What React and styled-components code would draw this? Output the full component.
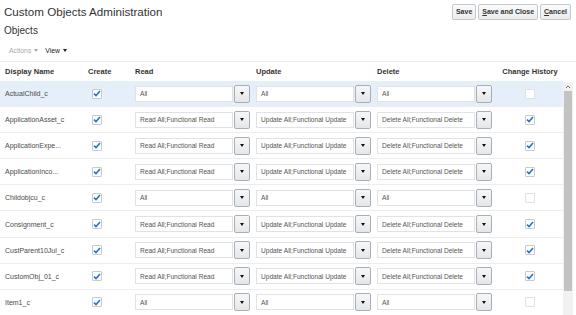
import React from "react";
import styled, { createGlobalStyle } from "styled-components";

const GlobalStyle = createGlobalStyle`
  body {
    margin: 0;
    background: #fff;
    font-family: "Liberation Sans", Arial, sans-serif;
    color: #333;
  }
`;

const Page = styled.div`
  width: 576px;
  height: 315px;
  overflow: hidden;
  padding-top: 4px;
  box-sizing: border-box;
`;

const TopBar = styled.div`
  display: flex;
  justify-content: space-between;
  align-items: center;
  height: 15px;
  padding: 0 5px 0 4px;
`;

const Title = styled.h1`
  margin: 0;
  font-size: 11.6px;
  line-height: 14px;
  font-weight: normal;
  color: #333;
`;

const ButtonGroup = styled.div`
  display: flex;
  gap: 2px;
`;

const Button = styled.button`
  height: 16px;
  padding: 0 3px;
  font-family: inherit;
  font-size: 7px;
  font-weight: bold;
  color: #333;
  background: linear-gradient(#fbfbfb, #e9ecee);
  border: 1px solid #c4c8cc;
  border-radius: 2px;
  u {
    text-decoration: underline;
  }
`;

const SubTitle = styled.h2`
  margin: 6px 0 0 4px;
  font-size: 10px;
  line-height: 12px;
  font-weight: normal;
  color: #333;
`;

const Toolbar = styled.div`
  display: flex;
  gap: 7px;
  margin: 8px 0 0 9px;
  height: 10px;
  align-items: center;
`;

const MenuItem = styled.span`
  font-size: 6.8px;
  color: ${(p) => (p.disabled ? "#a8a8a8" : "#222")};
  display: flex;
  align-items: center;
  gap: 3px;
`;

const Caret = styled.span`
  width: 0;
  height: 0;
  border-left: 2.5px solid transparent;
  border-right: 2.5px solid transparent;
  border-top: 3px solid ${(p) => p.color || "#222"};
`;

const TableWrap = styled.div`
  margin-top: 6px;
  border-top: 1px solid #ececec;
  display: flex;
`;

const Table = styled.div`
  width: 563px;
  display: grid;
  grid-template-columns: 84px 47px 121px 121px 124px 66px;
`;

const HeadCell = styled.div`
  height: 19px;
  display: flex;
  align-items: center;
  justify-content: ${(p) => (p.center ? "center" : "flex-start")};
  padding-left: ${(p) => (p.center ? 0 : p.pad || 4)}px;
  font-size: 7.5px;
  font-weight: bold;
  color: #333;
`;

const Cell = styled.div`
  height: 25px;
  border-bottom: 1px solid #ededed;
  background: ${(p) => (p.selected ? "#e4effa" : "#fff")};
  display: flex;
  align-items: center;
  justify-content: ${(p) => (p.center ? "center" : "flex-start")};
  padding-left: ${(p) => (p.center ? 0 : p.pad || 4)}px;
  font-size: 7px;
  color: #4a4a4a;
  white-space: nowrap;
`;

const Box = styled.span`
  width: 10px;
  height: 10px;
  box-sizing: border-box;
  margin-left: ${(p) => p.offset || 0}px;
  border: 1px solid ${(p) => (p.disabled ? "#e0e0e0" : "#c8cbce")};
  border-radius: 1px;
  background: #fff;
  display: flex;
  align-items: center;
  justify-content: center;
`;

const Select = styled.div`
  width: 115px;
  height: 18px;
  display: flex;
  align-items: center;
  gap: 1px;
`;

const Field = styled.div`
  flex: 1;
  height: 16px;
  box-sizing: border-box;
  border: 1px solid #dfe3e7;
  background: #fff;
  padding-left: 4px;
  display: flex;
  align-items: center;
  font-size: 6.6px;
  color: #555;
  overflow: hidden;
`;

const DropButton = styled.div`
  width: 16px;
  height: 18px;
  box-sizing: border-box;
  border: 1px solid #a9aeb3;
  border-radius: 2px;
  background: linear-gradient(#f6f7f8, #e4e7ea);
  display: flex;
  align-items: center;
  justify-content: center;
`;

const Scrollbar = styled.div`
  width: 10px;
  margin-top: 20px;
  height: 234px;
  background: #f1f1f1;
  display: flex;
  flex-direction: column;
`;

const ScrollArrow = styled.div`
  height: 9px;
  display: flex;
  align-items: center;
  justify-content: center;
`;

const Thumb = styled.div`
  height: 200px;
  background: #c3c3c3;
  margin: 0 1px;
`;

function Check({ checked, disabled, offset }) {
  return (
    <Box disabled={disabled} offset={offset}>
      {checked && (
        <svg width="8" height="7" viewBox="0 0 8 7">
          <path d="M1 3.6 L3 5.6 L7 1" fill="none" stroke="#2673c9" strokeWidth="1.6" />
        </svg>
      )}
    </Box>
  );
}

function Dropdown({ value }) {
  return (
    <Select>
      <Field>{value}</Field>
      <DropButton>
        <Caret color="#111" />
      </DropButton>
    </Select>
  );
}

const rows = [
  { name: "ActualChild_c", full: false, history: false },
  { name: "ApplicationAsset_c", full: true, history: true },
  { name: "ApplicationExpe...", full: true, history: true },
  { name: "ApplicationInco...", full: true, history: true },
  { name: "Childobjcu_c", full: false, history: false },
  { name: "Consignment_c", full: true, history: true },
  { name: "CustParent10Jul_c", full: true, history: true },
  { name: "CustomObj_01_c", full: true, history: true },
  { name: "Item1_c", full: false, history: false },
];

export default function App() {
  return (
    <Page>
      <GlobalStyle />
      <TopBar>
        <Title>Custom Objects Administration</Title>
        <ButtonGroup>
          <Button>Save</Button>
          <Button>
            <u>S</u>ave and Close
          </Button>
          <Button>
            <u>C</u>ancel
          </Button>
        </ButtonGroup>
      </TopBar>
      <SubTitle>Objects</SubTitle>
      <Toolbar>
        <MenuItem disabled>
          Actions <Caret color="#a8a8a8" />
        </MenuItem>
        <MenuItem>
          View <Caret />
        </MenuItem>
      </Toolbar>
      <TableWrap>
        <Table>
          <HeadCell pad={5}>Display Name</HeadCell>
          <HeadCell>Create</HeadCell>
          <HeadCell>Read</HeadCell>
          <HeadCell>Update</HeadCell>
          <HeadCell>Delete</HeadCell>
          <HeadCell center>Change History</HeadCell>
          {rows.map((r, i) => {
            const sel = i === 0;
            return (
              <React.Fragment key={r.name}>
                <Cell selected={sel} pad={5}>{r.name}</Cell>
                <Cell selected={sel}>
                  <Check checked offset={4} />
                </Cell>
                <Cell selected={sel}>
                  <Dropdown value={r.full ? "Read All;Functional Read" : "All"} />
                </Cell>
                <Cell selected={sel}>
                  <Dropdown value={r.full ? "Update All;Functional Update" : "All"} />
                </Cell>
                <Cell selected={sel}>
                  <Dropdown value={r.full ? "Delete All;Functional Delete" : "All"} />
                </Cell>
                <Cell selected={sel} center>
                  <Check checked={r.history} disabled={!r.history} />
                </Cell>
              </React.Fragment>
            );
          })}
        </Table>
        <Scrollbar>
          <ScrollArrow>
            <svg width="6" height="4" viewBox="0 0 6 4">
              <path d="M1 3 L3 1 L5 3" fill="none" stroke="#777" strokeWidth="1" />
            </svg>
          </ScrollArrow>
          <Thumb />
        </Scrollbar>
      </TableWrap>
    </Page>
  );
}
